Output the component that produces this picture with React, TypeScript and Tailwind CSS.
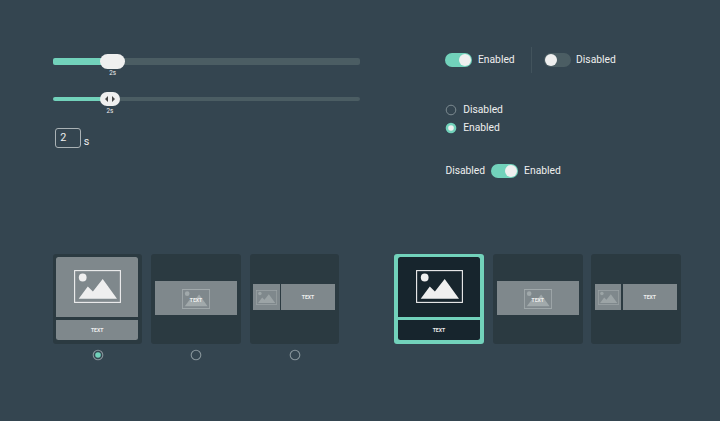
import React from 'react';

function Picture({ className, thin = false }: { className: string; thin?: boolean }) {
  return (
    <svg viewBox="0 0 47 33" className={className} fill="none">
      <rect x="0.6" y="0.6" width="45.8" height="31.8" stroke="currentColor" strokeWidth={thin ? 1.7 : 1.1} />
      <circle cx="8.7" cy="7.5" r="3.9" fill="currentColor" />
      <path d="M4.7 28.8 L13.8 16.6 L18.9 21.5 L28.7 9 L43 28.8 Z" fill="currentColor" />
    </svg>
  );
}

function Toggle({ on = false }: { on?: boolean }) {
  return on ? (
    <span className="flex h-[13.4px] w-[26.6px] shrink-0 items-center justify-end rounded-full bg-[#72d2bb] pr-[0.5px]">
      <span className="size-[12.4px] rounded-full bg-[#efefef]" />
    </span>
  ) : (
    <span className="flex h-[13.6px] w-[26.6px] shrink-0 items-center rounded-full bg-[#4b5d63] pl-[0.3px]">
      <span className="size-[12.4px] rounded-full bg-[#efefef]" />
    </span>
  );
}

function Slider({ slim = false }: { slim?: boolean }) {
  return slim ? (
    <div className="flex h-[14px] w-[307.5px] items-center">
      <div className="h-[3.6px] w-[49px] shrink-0 rounded-l-full bg-[#72d2bb]" />
      <div className="z-10 -ml-[2px] flex h-[14px] w-[20px] shrink-0 items-center justify-center rounded-full bg-[#efefef]">
        <svg viewBox="0 0 10 6" className="h-[6px] w-[10px] fill-[#454545]">
          <path d="M3 0 V6 L0 3 Z M7 0 V6 L10 3 Z" />
        </svg>
      </div>
      <div className="-ml-[2px] h-[3.6px] flex-1 rounded-r-full bg-[#4b5d63]" />
    </div>
  ) : (
    <div className="flex h-[14.4px] w-[307.5px] items-center">
      <div className="h-[7.4px] w-[51px] shrink-0 rounded-l-[2px] bg-[#72d2bb]" />
      <div className="z-10 -ml-[4px] h-[14.4px] w-[25.6px] shrink-0 rounded-full bg-[#efefef]" />
      <div className="-ml-[4px] h-[7.4px] flex-1 rounded-r-[2px] bg-[#4b5d63]" />
    </div>
  );
}

function CardRadio({ on = false }: { on?: boolean }) {
  return (
    <svg viewBox="0 0 12 12" className="mt-[5.4px] ml-[0.6px] size-[12px]" fill="none">
      <circle cx="6" cy="6" r="4.8" stroke="#87949a" strokeWidth="1.1" />
      {on && <circle cx="6" cy="6" r="2.8" fill="#72d2bb" />}
    </svg>
  );
}

const caption = 'text-[5.1px] leading-[6px] font-bold text-[#efefef]';

function StackedCard({ active = false }: { active?: boolean }) {
  const tile = active ? 'bg-[#17252d]' : 'bg-[#7f888c]';
  return (
    <div className={`flex h-[89.6px] w-[89.6px] flex-col gap-[3px] rounded-[3px] pt-[3.2px] pr-[3.8px] pb-[3.4px] pl-[3.8px] ${active ? 'bg-[#72d2bb]' : 'bg-[#2b3a41]'}`}>
      <div className={`flex h-[59.4px] items-center justify-center rounded-t-[2.5px] pb-[1px] ${tile}`}>
        <Picture className="h-[33px] w-[47px] text-[#efefef]" />
      </div>
      <div className={`flex flex-1 items-center justify-center rounded-b-[2.5px] pr-[0.8px] ${tile}`}>
        <span className={caption}>TEXT</span>
      </div>
    </div>
  );
}

function OverlayCard() {
  return (
    <div className="flex h-[89.6px] w-[89.6px] flex-col rounded-[3px] bg-[#2b3a41] px-[3.8px] pt-[27px]">
      <div className="grid h-[33.5px] place-items-center bg-[#7f888c] pt-[3px]">
        <Picture thin className="col-start-1 row-start-1 h-[20px] w-[28px] text-[#a1a9ab]" />
        <span className={`${caption} z-10 col-start-1 row-start-1 pt-[1px]`}>TEXT</span>
      </div>
    </div>
  );
}

function SplitCard() {
  return (
    <div className="flex h-[89.6px] w-[89.6px] gap-[1.4px] rounded-[3px] bg-[#2b3a41] pt-[29.7px] pr-[3.8px] pl-[3.6px]">
      <div className="flex h-[26.3px] w-[26.4px] items-center justify-center bg-[#7f888c] pt-[1px] pl-[1px]">
        <Picture thin className="h-[15px] w-[21px] text-[#9ca4a6]" />
      </div>
      <div className="flex h-[26.3px] flex-1 items-center justify-center bg-[#7f888c] pr-[0.6px]">
        <span className={caption}>TEXT</span>
      </div>
    </div>
  );
}

export default function App() {
  return (
    <main className="h-[421px] w-[720px] overflow-hidden bg-[#344550] font-['Roboto','Liberation_Sans',sans-serif] text-[10.3px] leading-[14px] text-[#efefef]">
      <section className="flex h-[254px]">
        <div className="flex w-[392.5px] flex-col items-start pt-[54.4px] pl-[52.7px]">
          <Slider />
          <span className="mt-[1.4px] ml-[56.5px] text-[6.3px] leading-[7px]">2s</span>
          <div className="mt-[14.8px]"><Slider slim /></div>
          <span className="mt-[1.6px] ml-[53.8px] text-[6.3px] leading-[7px]">2s</span>
          <div className="mt-[13.4px] ml-[2px] flex items-start">
            <span className="flex h-[20px] w-[26.3px] items-center rounded-[3px] border border-[#aab2b5] pl-[4.5px] text-[10.8px]">2</span>
            <span className="mt-[7.2px] ml-[2.8px] text-[10.8px]">s</span>
          </div>
        </div>

        <div className="flex flex-col items-start pt-[47px] pl-[52.9px]">
          <div className="flex h-[26px] items-center">
            <Toggle on />
            <span className="ml-[6px] w-[53px] pt-[0.6px]">Enabled</span>
            <span className="h-[26px] w-px bg-[#42535c]" />
            <span className="ml-[12.5px] flex items-center gap-[5px]">
              <Toggle />
              <span className="pt-[0.6px]">Disabled</span>
            </span>
          </div>
          <div className="mt-[30px] flex flex-col gap-[3.5px]">
            <div className="flex items-center gap-[5.8px]">
              <svg viewBox="0 0 12 12" className="size-[12px]">
                <circle cx="6" cy="6" r="4.8" fill="none" stroke="#7c8a90" strokeWidth="1" />
              </svg>
              <span>Disabled</span>
            </div>
            <div className="flex items-center gap-[5.8px]">
              <svg viewBox="0 0 12 12" className="size-[12px]">
                <circle cx="6" cy="6" r="5.3" fill="#72d2bb" />
                <circle cx="6" cy="6" r="2.8" fill="#efefef" />
              </svg>
              <span>Enabled</span>
            </div>
          </div>
          <div className="mt-[29.7px] flex items-center gap-[6.2px]">
            <span>Disabled</span>
            <Toggle on />
            <span>Enabled</span>
          </div>
        </div>
      </section>

      <section className="flex pl-[52.7px]">
        <div className="flex w-[341.8px] gap-[8.9px]">
          <div className="flex flex-col items-center"><StackedCard /><CardRadio on /></div>
          <div className="flex flex-col items-center"><OverlayCard /><CardRadio /></div>
          <div className="flex flex-col items-center"><SplitCard /><CardRadio /></div>
        </div>
        <div className="flex gap-[8.9px]">
          <StackedCard active />
          <OverlayCard />
          <SplitCard />
        </div>
      </section>
    </main>
  );
}
